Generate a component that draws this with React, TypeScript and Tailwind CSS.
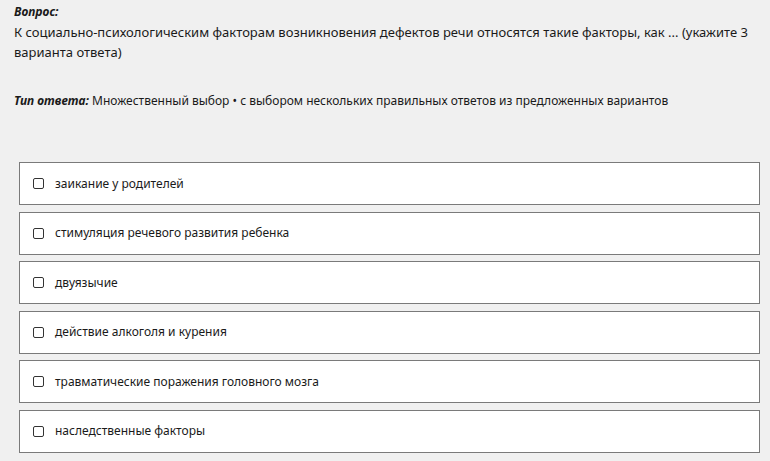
import React, { useState } from "react";

const OPTIONS = [
    "заикание у родителей",
    "стимуляция речевого развития ребенка",
    "двуязычие",
    "действие алкоголя и курения",
    "травматические поражения головного мозга",
    "наследственные факторы",
];

export default function App() {
    const [checked, setChecked] = useState<boolean[]>(OPTIONS.map(() => false));

    function toggle(index: number) {
        setChecked(prev => prev.map((v, i) => (i === index ? !v : v)));
    }

    return (
        <div
            className="min-h-[461px] w-full bg-[#f0f0f0] text-[#1a1a1a] text-[13px] leading-[20px] pl-[14px] pr-[10px] pt-[2px]"
            style={{ fontFamily: '"Noto Sans", "Open Sans", sans-serif' }}
        >
            <div className="font-bold italic text-[12px]">Вопрос:</div>
            <div className="pr-[6px]">
                К социально-психологическим факторам возникновения дефектов речи относятся такие факторы, как ... (укажите 3 варианта ответа)
            </div>
            <div className="mt-[29px] text-[12px]">
                <span className="font-bold italic">Тип ответа:</span> Множественный выбор • с выбором нескольких правильных ответов из предложенных вариантов
            </div>
            <div className="mt-[51px] ml-[5px] flex flex-col gap-[6.5px] text-[12px]">
                {OPTIONS.map((option, index) => (
                    <label
                        key={index}
                        className="h-[43px] flex items-center gap-[11px] bg-white border border-[#7a7a7a] pl-[13px] cursor-pointer"
                    >
                        <span
                            className={(checked[index] ? "bg-[#333]" : "bg-white") + " w-[11px] h-[11px] rounded-[2px] border-[1.5px] border-[#333]"}
                            onClick={() => toggle(index)}
                        />
                        <span>{option}</span>
                    </label>
                ))}
            </div>
        </div>
    );
}
